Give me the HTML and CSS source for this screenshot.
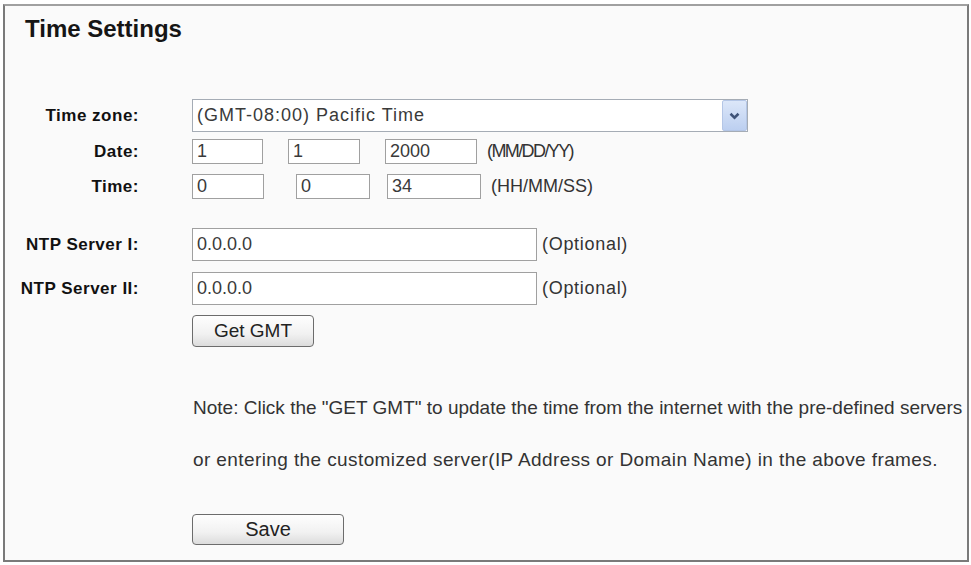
FILE: index.html
```html
<!DOCTYPE html>
<html lang="en">
<head>
  <meta charset="UTF-8">
  <meta name="viewport" content="width=device-width, initial-scale=1.0">
  <title>Time Settings</title>
  <link rel="stylesheet" href="styles.css">
</head>
<body>
  <div class="panel">
    <h1>Time Settings</h1>

    <div class="form">
      <div class="row row-zone">
        <label>Time zone:</label>
        <div class="select">
          <span class="select-value">(GMT-08:00) Pacific Time</span>
          <span class="select-arrow">
            <svg width="11" height="8" viewBox="0 0 11 8"><path d="M1.5 1.8 L5.5 5.6 L9.5 1.8" fill="none" stroke="#3f5378" stroke-width="2.6"/></svg>
          </span>
        </div>
      </div>

      <div class="row row-date">
        <label>Date:</label>
        <input class="field d1" type="text" value="1">
        <input class="field d2" type="text" value="1">
        <input class="field d3" type="text" value="2000">
        <span class="hint hint-date">(MM/DD/YY)</span>
      </div>

      <div class="row row-time">
        <label>Time:</label>
        <input class="field t1" type="text" value="0">
        <input class="field t2" type="text" value="0">
        <input class="field t3" type="text" value="34">
        <span class="hint">(HH/MM/SS)</span>
      </div>

      <div class="row row-ntp1">
        <label>NTP Server I:</label>
        <input class="field ntp" type="text" value="0.0.0.0">
        <span class="hint hint-opt">(Optional)</span>
      </div>

      <div class="row row-ntp2">
        <label>NTP Server II:</label>
        <input class="field ntp" type="text" value="0.0.0.0">
        <span class="hint hint-opt">(Optional)</span>
      </div>

      <button class="btn btn-gmt">Get GMT</button>

      <p class="note">Note: Click the "GET GMT" to update the time from the internet with the pre-defined servers<br><span class="note-wide">or entering the customized server(IP Address or Domain Name) in the above frames.</span></p>

      <button class="btn btn-save">Save</button>
    </div>
  </div>
</body>
</html>
```

FILE: styles.css
```css
body {
  margin: 0;
  background: #fff;
  font-family: "Liberation Sans", Arial, sans-serif;
  color: #222;
}
.panel {
  margin: 4px 2px 0 3px;
  height: 558px;
  box-sizing: border-box;
  border: 2px solid #7a7a7a;
  border-top-color: #a0a0a0;
  background: #fafafa;
}
.panel h1 {
  margin: 9px 0 0 20px;
  font-size: 24px;
  line-height: 28px;
  font-weight: bold;
  color: #151515;
}
.form {
  margin-top: 56px;
}
.row {
  display: flex;
  align-items: center;
}
.row label {
  width: 134px;
  margin-right: 53px;
  text-align: right;
  font-weight: bold;
  font-size: 17px;
  letter-spacing: 0.5px;
  color: #111;
}
.row-zone { height: 33px; }
.row-date { height: 25px; margin-top: 7px; }
.row-time { height: 25px; margin-top: 10px; }
.row-ntp1 { height: 33px; margin-top: 29px; }
.row-ntp2 { height: 33px; margin-top: 11px; }

.select {
  display: flex;
  align-items: center;
  width: 556px;
  height: 33px;
  box-sizing: border-box;
  border: 1px solid #a5acb5;
  background: #fff;
}
.select-value {
  flex: 1;
  padding-left: 4px;
  font-size: 18px;
  letter-spacing: 1px;
  color: #3a3a3a;
}
.select-arrow {
  display: flex;
  align-items: center;
  justify-content: center;
  width: 25px;
  height: 31px;
  box-sizing: border-box;
  border: 1px solid #b4c6e6;
  border-radius: 2px;
  background: linear-gradient(#dce7f9, #bccff0);
}

.field {
  height: 25px;
  box-sizing: border-box;
  border: 1px solid #a0a0a0;
  padding: 0 4px;
  margin: 0;
  font-family: "Liberation Sans", Arial, sans-serif;
  font-size: 18px;
  color: #3a3a3a;
  background: #fff;
  outline: none;
}
.d1 { width: 71px; margin-right: 25px; }
.d2 { width: 72px; margin-right: 25px; }
.d3 { width: 92px; margin-right: 10px; }
.t1 { width: 72px; margin-right: 32px; }
.t2 { width: 74px; margin-right: 17px; }
.t3 { width: 94px; margin-right: 10px; }
.ntp {
  width: 345px;
  height: 33px;
  margin-right: 5px;
}

.hint {
  font-size: 18px;
  color: #333;
}
.hint-date { letter-spacing: -1.6px; }
.hint-opt { letter-spacing: 0.7px; }

.btn {
  display: block;
  margin-left: 187px;
  box-sizing: border-box;
  border: 1px solid #6c6c6c;
  border-radius: 4px;
  background: linear-gradient(#fefefe, #f1f1f1 60%, #dcdcdc);
  font-family: "Liberation Sans", Arial, sans-serif;
  color: #222;
  padding: 0;
}
.btn-gmt {
  margin-top: 10px;
  width: 122px;
  height: 32px;
  font-size: 19px;
}
.btn-save {
  margin-top: 28px;
  width: 152px;
  height: 31px;
  font-size: 20px;
}

.note {
  margin: 35px 0 0 188px;
  font-size: 19px;
  line-height: 52px;
  color: #333;
}
.note-wide {
  letter-spacing: 0.4px;
}
```
